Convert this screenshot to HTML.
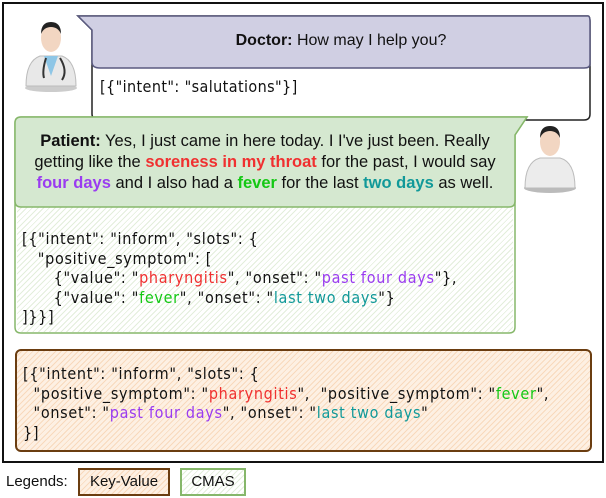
<!DOCTYPE html>
<html><head><style>
*{margin:0;padding:0;box-sizing:border-box}
html,body{width:606px;height:498px;overflow:hidden}
body{background:#fff;position:relative;font-family:"Liberation Sans",sans-serif;color:#111}
.a{position:absolute}
.code{font-family:"DejaVu Sans Condensed","DejaVu Sans",sans-serif;font-size:16px;line-height:19.5px;white-space:pre;letter-spacing:0.7px}
.r{color:#f03030}.p{color:#9a3cf0}.g{color:#14c814}.t{color:#119999}
.hatchg{background:repeating-linear-gradient(135deg,#fff 0 3px,#e3eedb 3px 4px)}
.hatcho{background:repeating-linear-gradient(135deg,#fdf0e3 0 3px,#f8d9bc 3px 4px)}
</style></head><body>
<div class="a" style="left:2px;top:2px;width:602px;height:461px;border:2px solid #111"></div>

<svg class="a" style="left:22px;top:16px" width="58" height="76" viewBox="0 0 58 76">
<ellipse cx="29" cy="72" rx="26" ry="4" fill="#ccc"/>
<path d="M4 70 Q4 45 18 40 L40 40 Q54 45 54 70Z" fill="#e8e8e8" stroke="#bbb"/>
<path d="M22 40 L29 60 L36 40Z" fill="#8ec6e6"/>
<path d="M24 42 Q20 55 22 62 M38 42 Q46 55 40 64" stroke="#333" stroke-width="2" fill="none"/>
<ellipse cx="29" cy="22" rx="10" ry="14" fill="#f2d6c2"/>
<path d="M19 18 Q19 6 29 6 Q39 6 39 18 Q36 11 29 11 Q22 11 19 18Z" fill="#222"/>
</svg>
<svg class="a" style="left:76px;top:14px" width="516" height="108">
<path d="M2 2 L512 2 Q514 2 514 8 L514 100 Q514 106 508 106 L24 106 Q16 106 16 100 L16 16 Z" fill="#fff" stroke="#222" stroke-width="1.5"/>
<path d="M2 2 L512 2 Q514 2 514 8 L514 50 Q514 54 508 54 L24 54 Q16 54 16 48 L16 16 Z" fill="#d0cfe3" stroke="#5a5a80" stroke-width="1.5"/>
</svg>
<div class="a" style="left:92px;top:32px;width:498px;text-align:center;font-size:16px"><b>Doctor:</b> How may I help you?</div>
<div class="a code" style="left:100px;top:77px;letter-spacing:0.4px">[{"intent": "salutations"}]</div>

<svg class="a" style="left:520px;top:122px" width="60" height="72" viewBox="0 0 60 72">
<ellipse cx="30" cy="66" rx="26" ry="5" fill="#bbb"/>
<path d="M5 66 Q5 40 20 36 L40 36 Q55 40 55 66Z" fill="#ececec" stroke="#bbb"/>
<ellipse cx="30" cy="20" rx="10" ry="14" fill="#f2d6c2"/>
<path d="M20 16 Q20 4 30 4 Q40 4 40 16 Q37 9 30 9 Q23 9 20 16Z" fill="#222"/>
</svg>
<svg class="a" style="left:13px;top:115px" width="518" height="224">
<path d="M8 2 L514 2 L502 20 L502 212 Q502 218 496 218 L8 218 Q2 218 2 212 L2 8 Q2 2 8 2Z" fill="#fff" stroke="#86b76a" stroke-width="1.5"/>
</svg>
<div class="a hatchg" style="left:17px;top:207px;width:496px;height:125px;border-radius:0 0 5px 5px"></div>
<svg class="a" style="left:13px;top:115px" width="518" height="96">
<path d="M8 2 L514 2 L502 20 L502 86 Q502 92 496 92 L8 92 Q2 92 2 86 L2 8 Q2 2 8 2Z" fill="#d5e8d0" stroke="#86b76a" stroke-width="1.5"/>
</svg>
<div class="a" style="left:15px;top:131px;width:500px;text-align:center;font-size:16.5px;line-height:21px"><b>Patient:</b> Yes, I just came in here today. I I've just been. Really<br>getting like the <b class="r">soreness in my throat</b> for the past, I would say<br><b class="p">four days</b> and I also had a <b class="g">fever</b> for the last <b class="t">two days</b> as well.</div>
<div class="a code" style="left:22px;top:229px">[{"intent": "inform", "slots": {
   "positive_symptom": [
      {"value": "<span class="r">pharyngitis</span>", "onset": "<span class="p">past four days</span>"},
      {"value": "<span class="g">fever</span>", "onset": "<span class="t">last two days</span>"}
]}}]</div>

<div class="a hatcho" style="left:15px;top:349px;width:577px;height:103px;border:2px solid #6b3d10;border-radius:6px"></div>
<div class="a code" style="left:23px;top:364px">[{"intent": "inform", "slots": {
  "positive_symptom": "<span class="r">pharyngitis</span>",  "positive_symptom": "<span class="g">fever</span>",
  "onset": "<span class="p">past four days</span>", "onset": "<span class="t">last two days</span>"
}]</div>

<div class="a" style="left:6px;top:473px;font-size:15px;white-space:nowrap">Legends:</div>
<div class="a hatcho" style="left:78px;top:468px;width:92px;height:28px;border:2px solid #6b3d10;font-size:15px;text-align:center;line-height:24px;white-space:nowrap">Key-Value</div>
<div class="a hatchg" style="left:180px;top:468px;width:66px;height:28px;border:2px solid #86b76a;font-size:15px;text-align:center;line-height:24px;white-space:nowrap">CMAS</div>
</body></html>
